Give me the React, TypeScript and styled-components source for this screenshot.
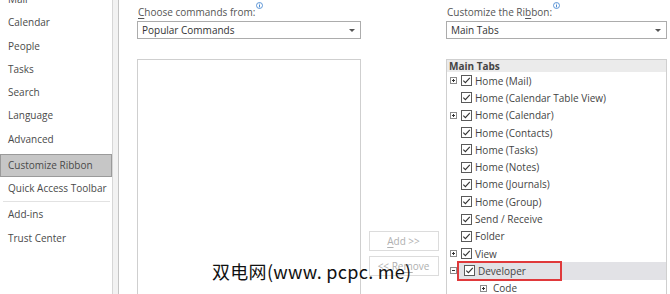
import styled, { createGlobalStyle } from "styled-components"

const GlobalStyle = createGlobalStyle`
  html, body {
    margin: 0;
    padding: 0;
    background: #ffffff;
  }
  body {
    font-family: "Open Sans", "Noto Sans", sans-serif;
    font-size: 10px;
    color: #484848;
    overflow: hidden;
  }
`

const Window = styled.div`
  position: relative;
  width: 670px;
  height: 294px;
  display: flex;
  overflow: hidden;
  background: #ffffff;
`

const Sidebar = styled.nav`
  width: 112px;
  flex: none;
  display: flex;
  flex-direction: column;
  margin-top: -12px;
`

const NavItem = styled.div<{ $active?: boolean }>`
  height: ${(p) => (p.$active ? 21 : 23.3)}px;
  line-height: ${(p) => (p.$active ? 21 : 23.3)}px;
  white-space: nowrap;
  color: #4a4a4a;
  background: ${(p) => (p.$active ? "#c6c6c6" : "transparent")};
  border: ${(p) => (p.$active ? "1px solid #9a9a9a" : "none")};
  padding-left: ${(p) => (p.$active ? 7 : 8)}px;
`

const NavSep = styled.div<{ $visible?: boolean }>`
  height: 1px;
  margin: 1px 2px 1px 3px;
  background: ${(p) => (p.$visible ? "#e2e2e2" : "transparent")};
`

const Splitter = styled.div`
  width: 7px;
  flex: none;
  border-left: 1px solid #d6d6d6;
  border-right: 1px solid #c4c4c4;
  background: #f2f2f2;
  box-sizing: border-box;
`

const Main = styled.div`
  flex: 1;
  display: grid;
  grid-template-columns: 224px 85px 221px;
  padding-left: 18px;
`

const Column = styled.div`
  display: flex;
  flex-direction: column;
  min-width: 0;
`

const FieldLabel = styled.div`
  height: 21px;
  line-height: 25px;
  color: #555555;
  white-space: nowrap;
  padding-left: 1px;
`

const Key = styled.span`
  text-decoration: underline;
  text-underline-offset: 2px;
`

const Info = styled.span`
  display: inline-block;
  width: 7px;
  height: 7px;
  margin-left: 1px;
  vertical-align: 7px;
  svg {
    display: block;
  }
`

const Select = styled.div`
  height: 16px;
  border: 1px solid #acacac;
  display: flex;
  align-items: center;
  justify-content: space-between;
  padding: 0 5px 0 4px;
  color: #333333;
  background: #ffffff;
`

const Caret = styled.span`
  width: 0;
  height: 0;
  border-left: 3px solid transparent;
  border-right: 3px solid transparent;
  border-top: 3px solid #555555;
`

const ListBox = styled.div`
  margin-top: 20px;
  flex: 1;
  border: 1px solid #cfcfcf;
  border-bottom: none;
  overflow: hidden;
  background: #ffffff;
`

const Actions = styled.div`
  display: flex;
  flex-direction: column;
  align-items: center;
  gap: 5px;
  padding-top: 231px;
`

const Button = styled.div`
  width: 68px;
  height: 18px;
  line-height: 18px;
  border: 1px solid #dcdcdc;
  text-align: center;
  color: #b0b0b0;
  background: #ffffff;
`

const TreeHeader = styled.div`
  height: 12px;
  line-height: 13px;
  padding-left: 2px;
  font-weight: 700;
  color: #444444;
  background: #ebebeb;
`

const TreeRow = styled.div<{ $level: number }>`
  height: 17.3px;
  display: flex;
  align-items: center;
  padding-left: ${(p) => (p.$level === 1 ? 3 : 33)}px;
  white-space: nowrap;
`

const ExpanderSlot = styled.span<{ $level: number }>`
  width: ${(p) => (p.$level === 1 ? 8 : 10)}px;
  flex: none;
  display: flex;
  align-items: center;
  svg {
    display: block;
  }
`

const ItemBody = styled.span<{ $selected?: boolean }>`
  flex: 1;
  height: 100%;
  display: flex;
  align-items: center;
  background: ${(p) => (p.$selected ? "#e2e2e6" : "transparent")};
`

const Marked = styled.span`
  display: flex;
  align-items: center;
  width: 99px;
  height: 16px;
  margin-left: -1px;
  padding-left: 2px;
  border: 2px solid #e0393b;
`

const Check = styled.span`
  width: 11px;
  height: 11px;
  flex: none;
  margin-left: 3px;
  svg {
    display: block;
  }
`

const ItemText = styled.span`
  margin-left: 3px;
  color: #444444;
`

const Watermark = styled.div`
  position: absolute;
  left: 212px;
  top: 258px;
  font-family: "Noto Sans CJK SC", "Liberation Sans", sans-serif;
  font-size: 18px;
  line-height: 26px;
  letter-spacing: 0.3px;
  color: #111111;
  white-space: nowrap;
`

function InfoIcon() {
  return (
    <Info>
      <svg width="7" height="7" viewBox="0 0 7 7">
        <circle cx="3.5" cy="3.5" r="3" fill="none" stroke="#3a7fcc" strokeWidth="0.8" />
        <line x1="3.5" y1="3" x2="3.5" y2="5.4" stroke="#3a7fcc" strokeWidth="0.9" />
        <circle cx="3.5" cy="1.9" r="0.5" fill="#3a7fcc" />
      </svg>
    </Info>
  )
}

function Expander({ open }: { open?: boolean }) {
  return (
    <svg width="7" height="7" viewBox="0 0 7 7">
      <rect x="0.5" y="0.5" width="6" height="6" fill="#ffffff" stroke="#8c8c8c" />
      <line x1="2" y1="3.5" x2="5" y2="3.5" stroke="#333333" />
      {!open && <line x1="3.5" y1="2" x2="3.5" y2="5" stroke="#333333" />}
    </svg>
  )
}

function CheckBox() {
  return (
    <Check>
      <svg width="11" height="11" viewBox="0 0 11 11">
        <rect x="0.5" y="0.5" width="10" height="10" fill="#ffffff" stroke="#5a5a5a" />
        <polyline points="2.3,5.6 4.4,7.7 8.8,2.8" fill="none" stroke="#333333" strokeWidth="1.1" />
      </svg>
    </Check>
  )
}

type Tab = { label: string; expander?: "plus" | "minus"; level: number; check: boolean; selected?: boolean }

const tabs: Tab[] = [
  { label: "Home (Mail)", expander: "plus", level: 1, check: true },
  { label: "Home (Calendar Table View)", level: 1, check: true },
  { label: "Home (Calendar)", expander: "plus", level: 1, check: true },
  { label: "Home (Contacts)", level: 1, check: true },
  { label: "Home (Tasks)", level: 1, check: true },
  { label: "Home (Notes)", level: 1, check: true },
  { label: "Home (Journals)", level: 1, check: true },
  { label: "Home (Group)", level: 1, check: true },
  { label: "Send / Receive", level: 1, check: true },
  { label: "Folder", level: 1, check: true },
  { label: "View", expander: "plus", level: 1, check: true },
  { label: "Developer", expander: "minus", level: 1, check: true, selected: true },
  { label: "Code", expander: "plus", level: 2, check: false },
]

const navGroups = [
  ["Mail", "Calendar", "People", "Tasks", "Search", "Language", "Advanced"],
  ["Customize Ribbon", "Quick Access Toolbar"],
  ["Add-ins", "Trust Center"],
]

function App() {
  return (
    <>
      <GlobalStyle />
      <Window>
        <Sidebar>
          {navGroups.map((group, gi) => (
            <div key={gi}>
              {gi > 0 && <NavSep $visible={gi === 2} />}
              {group.map((item) => (
                <NavItem key={item} $active={item === "Customize Ribbon"}>
                  {item}
                </NavItem>
              ))}
            </div>
          ))}
        </Sidebar>
        <Splitter />
        <Main>
          <Column>
            <FieldLabel>
              <Key>C</Key>hoose commands from:
              <InfoIcon />
            </FieldLabel>
            <Select>
              Popular Commands
              <Caret />
            </Select>
            <ListBox />
          </Column>
          <Actions>
            <Button>
              <Key>A</Key>dd &gt;&gt;
            </Button>
            <Button>
              &lt;&lt; Re<Key>m</Key>ove
            </Button>
          </Actions>
          <Column>
            <FieldLabel>
              Customize the Ri<Key>b</Key>bon:
              <InfoIcon />
            </FieldLabel>
            <Select>
              Main Tabs
              <Caret />
            </Select>
            <ListBox>
              <TreeHeader>Main Tabs</TreeHeader>
              {tabs.map((t) => (
                <TreeRow key={t.label} $level={t.level}>
                  <ExpanderSlot $level={t.level}>
                    {t.expander && <Expander open={t.expander === "minus"} />}
                  </ExpanderSlot>
                  <ItemBody $selected={t.selected}>
                    {t.selected ? (
                      <Marked>
                        <CheckBox />
                        <ItemText>{t.label}</ItemText>
                      </Marked>
                    ) : (
                      <>
                        {t.check && <CheckBox />}
                        <ItemText>{t.label}</ItemText>
                      </>
                    )}
                  </ItemBody>
                </TreeRow>
              ))}
            </ListBox>
          </Column>
        </Main>
        <Watermark>双电网(www. pcpc. me)</Watermark>
      </Window>
    </>
  )
}

export default App
